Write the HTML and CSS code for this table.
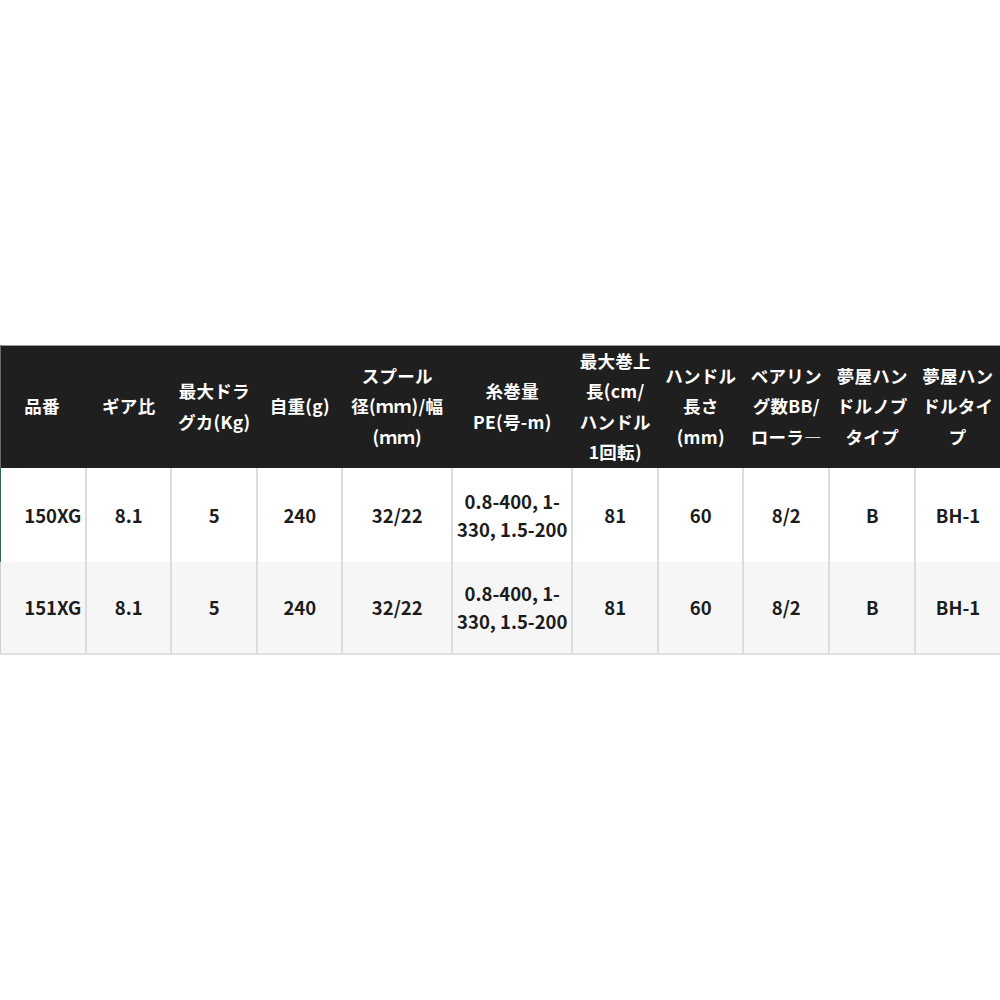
FILE: index.html
```html
<!DOCTYPE html>
<html lang="ja">
<head>
<meta charset="utf-8">
<link rel="stylesheet" href="styles.css">
</head>
<body>
<div class="page">
  <table class="spec">
    <colgroup>
      <col class="w86"><col class="w85"><col class="w86"><col class="w85"><col class="w110"><col class="w120"><col class="w86"><col class="w85"><col class="w86"><col class="w86"><col class="w85">
    </colgroup>
    <thead>
      <tr>
        <th class="first">品番</th>
        <th>ギア比</th>
        <th>最大ドラ<br>グカ(Kg)</th>
        <th>自重(g)</th>
        <th>スプール<br>径(ｍｍ)/幅<br>(ｍｍ)</th>
        <th>糸巻量<br>PE(号-m)</th>
        <th>最大巻上<br>長(cm/<br>ハンドル<br>1回転)</th>
        <th>ハンドル<br>長さ<br>(mm)</th>
        <th>ベアリン<br>グ数BB/<br>ローラ―</th>
        <th>夢屋ハン<br>ドルノブ<br>タイプ</th>
        <th>夢屋ハン<br>ドルタイ<br>プ</th>
      </tr>
    </thead>
    <tbody>
      <tr class="row-a">
        <td class="first">150XG</td>
        <td>8.1</td>
        <td>5</td>
        <td>240</td>
        <td>32/22</td>
        <td>0.8-400, 1-<br>330, 1.5-200</td>
        <td>81</td>
        <td>60</td>
        <td>8/2</td>
        <td>B</td>
        <td>BH-1</td>
      </tr>
      <tr class="row-b">
        <td class="first">151XG</td>
        <td>8.1</td>
        <td>5</td>
        <td>240</td>
        <td>32/22</td>
        <td>0.8-400, 1-<br>330, 1.5-200</td>
        <td>81</td>
        <td>60</td>
        <td>8/2</td>
        <td>B</td>
        <td>BH-1</td>
      </tr>
    </tbody>
  </table>
</div>
</body>
</html>
```

FILE: styles.css
```css
html, body {
  margin: 0;
  padding: 0;
  background: #ffffff;
}

.page {
  width: 1000px;
  height: 1000px;
  display: flex;
  align-items: center;
  justify-content: center;
  font-family: "Noto Sans CJK JP", "Noto Sans", sans-serif;
}

.spec {
  width: 1000px;
  table-layout: fixed;
  border-collapse: collapse;
  border-spacing: 0;
  margin-top: -1px;
}

.w86 { width: 86px; }
.w85 { width: 85px; }
.w110 { width: 110px; }
.w120 { width: 120px; }

.spec th {
  background: #1f1f1f;
  color: #ffffff;
  font-weight: 700;
  font-size: 17.5px;
  line-height: 30.5px;
  height: 122px;
  padding: 0 2px;
  text-align: center;
  vertical-align: middle;
  border-top: 1px solid #9a9a9a;
  white-space: nowrap;
  letter-spacing: 0.3px;
}

.spec th.first {
  border-left: 2px solid #6a6a6a;
}

.spec td {
  color: #1c1c1c;
  font-weight: 700;
  font-size: 18.5px;
  line-height: 28px;
  text-align: center;
  vertical-align: middle;
  padding: 0 2px;
  border-left: 2px solid #dcdcdc;
  white-space: nowrap;
}

.spec th.first,
.spec td.first {
  text-align: left;
  padding-left: 23px;
}

.row-a td { height: 94px; background: #ffffff; }
.row-a td.first { border-left: 2px solid #2f6a4c; }

.row-b td {
  height: 91px;
  background: #f6f6f6;
  border-bottom: 2px solid #e0e0e0;
}
.row-b td.first { border-left: 2px solid #d0d0d0; }

.spec tr td:last-child { border-right: 1px solid #e2e2e2; }
```
